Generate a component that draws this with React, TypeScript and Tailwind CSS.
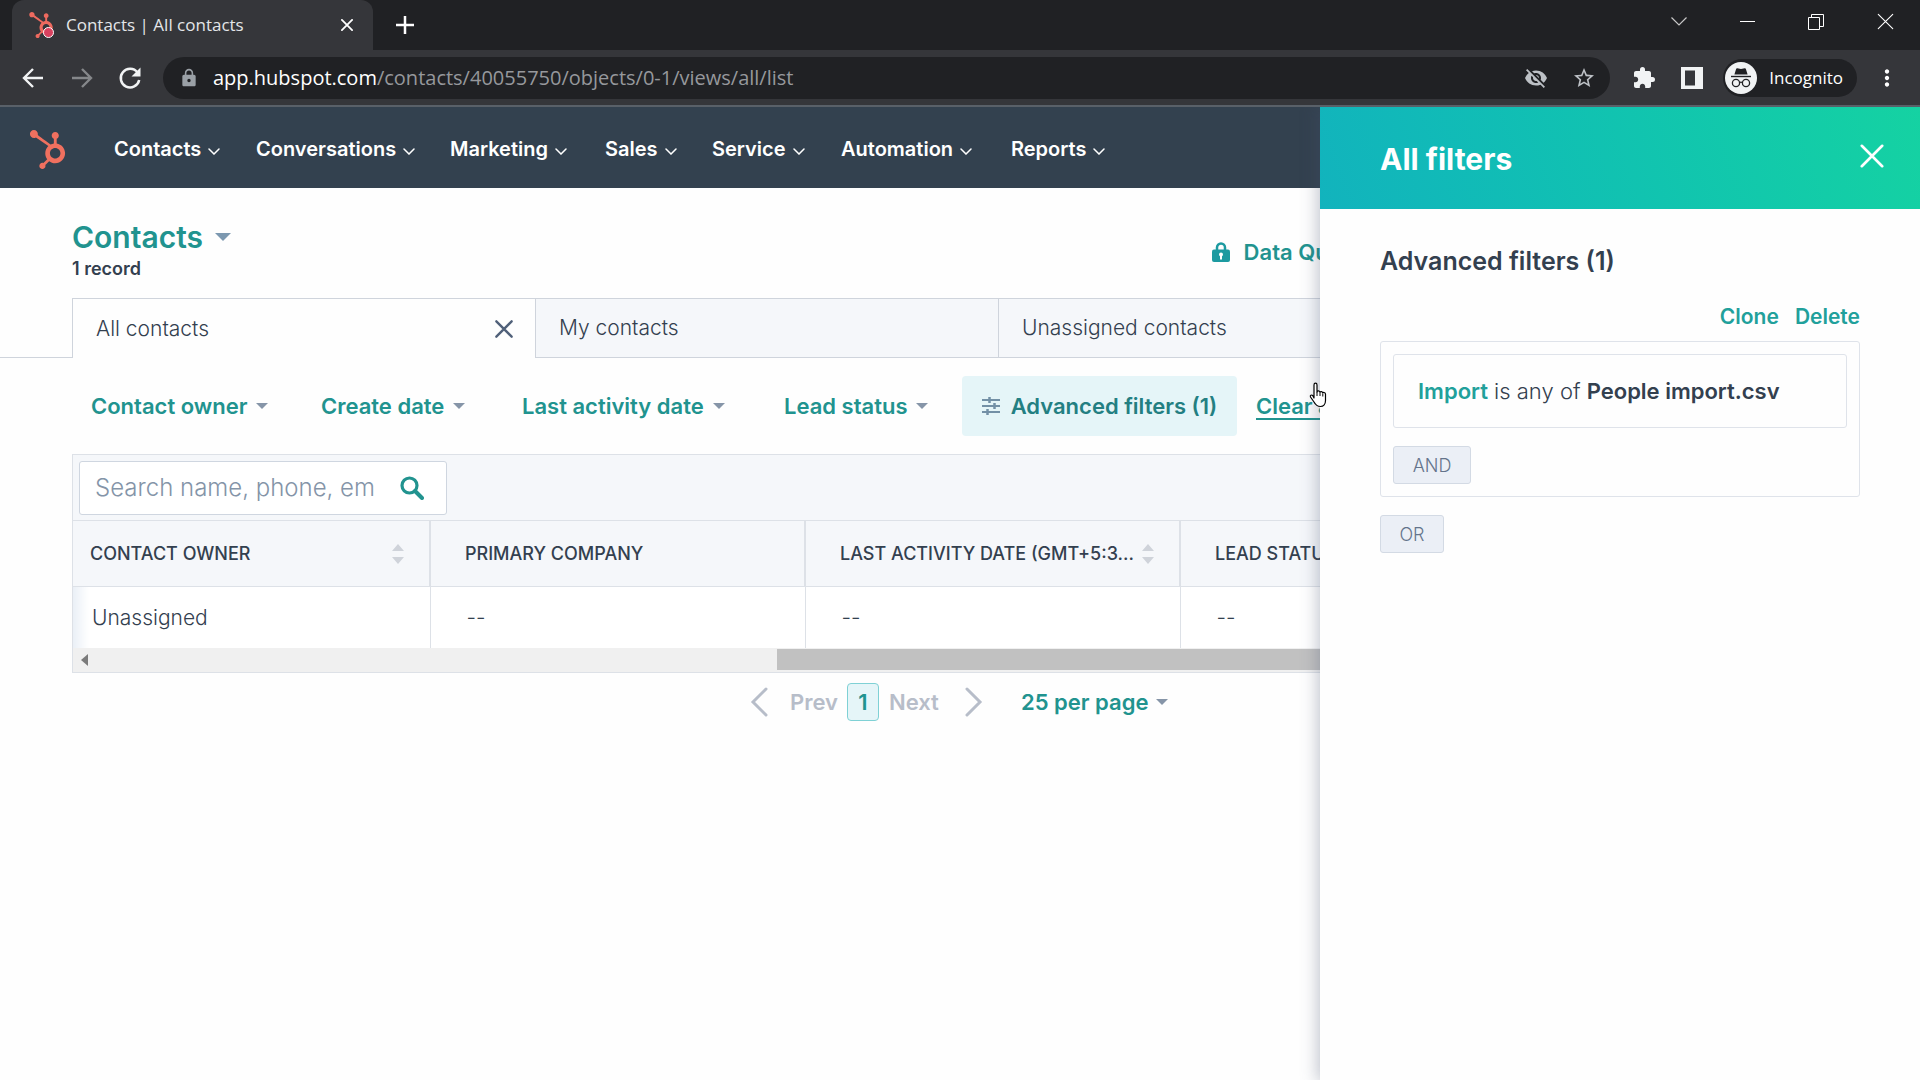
import React from "react";
import { FaHubspot } from "react-icons/fa";
import { MdExtension, MdLock, MdMoreVert, MdStarBorder, MdVisibilityOff } from "react-icons/md";

const UI_FONT = "font-[Inter,'Liberation_Sans',sans-serif]";
const CHROME_FONT = "font-['Open_Sans','Noto_Sans',sans-serif]";

function Caret({ className = "" }: { className?: string }) {
  return (
    <svg viewBox="0 0 12 6" className={`shrink-0 ${className}`} aria-hidden="true">
      <path d="M0 0h12L6 6z" fill="currentColor" />
    </svg>
  );
}

function Cross({ className = "", width = 2 }: { className?: string; width?: number }) {
  return (
    <svg viewBox="0 0 20 20" className={`shrink-0 ${className}`} aria-hidden="true">
      <path d="M1.5 1.5l17 17M18.5 1.5l-17 17" stroke="currentColor" strokeWidth={width} strokeLinecap="round" fill="none" />
    </svg>
  );
}

function SortIcon() {
  return (
    <svg viewBox="0 0 12 24" className="h-6 w-3 shrink-0 text-[#cfd3da]" aria-hidden="true">
      <path d="M6 2l6 7H0zM0 15h12l-6 7z" fill="currentColor" />
    </svg>
  );
}

function IncognitoIcon() {
  return (
    <svg viewBox="0 0 32 32" className="size-8 shrink-0" aria-hidden="true">
      <circle cx="16" cy="16" r="16" fill="#f1f3f4" />
      <path d="M12.3 6.2l3.7.9 3.7-.9c.6-.1 1 .1 1.200.7l1.700 5.600H9.400l1.700-5.600c.2-.6.6-.8 1.200-.7z" fill="#202124" />
      <path d="M6 14.500h20" stroke="#202124" strokeWidth="1.400" />
      <g fill="none" stroke="#202124" strokeWidth="1.300">
        <circle cx="11" cy="21" r="3.600" />
        <circle cx="21" cy="21" r="3.600" />
        <path d="M14.600 20.600c.9-.7 1.900-.7 2.800 0" />
      </g>
    </svg>
  );
}

function Browser() {
  return (
    <header className={`${CHROME_FONT} bg-[#35363a] text-white`}>
      <div className="flex h-[50px] items-stretch bg-[#202124] pl-3">
        <div className="flex w-[361px] items-center rounded-t-xl bg-[#35363a] pr-4 pl-4">
          <span className="relative mr-3 flex">
            <FaHubspot className="size-[26px] text-[#ee6a5f]" />
            <span className="absolute right-0 bottom-0 size-[11px] rounded-full border border-white bg-[#d9415f]" />
          </span>
          <span className="flex-1 text-[17px] whitespace-nowrap text-[#e4e6e9]">Contacts | All contacts</span>
          <button aria-label="Close tab" className="flex p-1">
            <Cross className="size-3" width={3} />
          </button>
        </div>
        <button aria-label="New tab" className="flex items-center px-[23px]">
          <svg viewBox="0 0 18 18" className="size-[18px]" aria-hidden="true">
            <path d="M9 0v18M0 9h18" stroke="currentColor" strokeWidth="2.500" />
          </svg>
        </button>
        <div className="ml-auto flex h-[43px] items-center">
          <button aria-label="Search tabs" className="flex w-[68px] justify-center">
            <svg viewBox="0 0 16 9" className="h-[9px] w-4" aria-hidden="true">
              <path d="M.5.5L8 8 15.500.5" fill="none" stroke="#c8c8c8" strokeWidth="1.200" />
            </svg>
          </button>
          <button aria-label="Minimize" className="flex w-[68px] justify-center">
            <span className="h-px w-[15px] bg-white" />
          </button>
          <button aria-label="Restore" className="flex w-[70px] justify-center">
            <svg viewBox="0 0 16 16" className="size-4" aria-hidden="true">
              <path d="M.5 3.500h11v12H.5zM3.500 3.500v-3h12v12h-4" fill="none" stroke="white" />
            </svg>
          </button>
          <button aria-label="Close window" className="flex w-[69px] justify-center">
            <Cross className="size-[17px]" width={1.3} />
          </button>
        </div>
      </div>
      <div className="flex h-[57px] items-center border-b-2 border-[#596068] pr-5 pl-[21px]">
        <button aria-label="Back" className="flex w-[49px]">
          <svg viewBox="0 0 24 24" className="size-6" aria-hidden="true">
            <path d="M22 12H3M12 3l-9 9 9 9" fill="none" stroke="#f1f3f4" strokeWidth="2.400" />
          </svg>
        </button>
        <button aria-label="Forward" className="flex w-12">
          <svg viewBox="0 0 24 24" className="size-6" aria-hidden="true">
            <path d="M2 12h19M12 3l9 9-9 9" fill="none" stroke="#85878a" strokeWidth="2.400" />
          </svg>
        </button>
        <button aria-label="Reload" className="flex w-[45px]">
          <svg viewBox="0 0 24 24" className="size-6" aria-hidden="true">
            <path d="M19.500 6.500A9.300 9.300 0 1 0 21.200 14" fill="none" stroke="#f1f3f4" strokeWidth="2.500" />
            <path d="M22.500 1.500v9h-9z" fill="#f1f3f4" />
          </svg>
        </button>
        <div className="flex h-[42px] flex-1 items-center rounded-full bg-[#202124] pr-[14px] pl-4">
          <MdLock className="mr-[14px] size-5 text-[#9aa0a6]" />
          <div role="textbox" aria-label="Address" className="flex-1 text-[20px] whitespace-nowrap text-[#96989c]">
            <span className="text-white">app.hubspot.com</span>/contacts/40055750/objects/0-1/views/all/list
          </div>
          <button aria-label="Third-party cookies blocked" className="mr-6">
            <MdVisibilityOff className="size-6 text-[#bdc1c6]" />
          </button>
          <button aria-label="Bookmark this tab">
            <MdStarBorder className="size-6 text-[#bdc1c6]" />
          </button>
        </div>
        <button aria-label="Extensions" className="ml-[22px]">
          <MdExtension className="size-6 text-[#f1f3f4]" />
        </button>
        <button aria-label="Side panel" className="mr-5 ml-[25px]">
          <svg viewBox="0 0 22 22" className="size-[22px]" aria-hidden="true">
            <path d="M0 0h22v22H0zM4 3.500v15h10v-15z" fill="#f1f3f4" fillRule="evenodd" />
          </svg>
        </button>
        <button className="flex h-[38px] items-center gap-3 rounded-full bg-[#202124] pr-[14px] pl-[2px] text-[17px]">
          <IncognitoIcon />
          Incognito
        </button>
        <button aria-label="Menu" className="ml-[17px]">
          <MdMoreVert className="size-[26px]" />
        </button>
      </div>
    </header>
  );
}

const navItems = [
  { label: "Contacts", width: "w-[142px]" },
  { label: "Conversations", width: "w-[194px]" },
  { label: "Marketing", width: "w-[155px]" },
  { label: "Sales", width: "w-[107px]" },
  { label: "Service", width: "w-[129px]" },
  { label: "Automation", width: "w-[170px]" },
  { label: "Reports", width: "w-[120px]" },
];

function TopNav() {
  return (
    <nav className="flex h-[81px] items-center bg-[#33414f] pt-[3px] pl-[28px] text-white">
      <a href="#home" aria-label="HubSpot home" className="mr-[47px]">
        <FaHubspot className="size-[39px] text-[#f0705f]" />
      </a>
      {navItems.map((item) => (
        <button key={item.label} className={`${item.width} flex shrink-0 items-center gap-[7px] text-[20px] font-semibold`}>
          {item.label}
          <svg viewBox="0 0 12 7" className="mt-1 h-[7px] w-3" aria-hidden="true">
            <path d="M1 1l5 5 5-5" fill="none" stroke="currentColor" strokeWidth="1.500" strokeLinecap="round" />
          </svg>
        </button>
      ))}
    </nav>
  );
}

function ViewTabs() {
  return (
    <div role="tablist" className="flex h-[60px]">
      <div className="w-[72px] shrink-0 border-b border-[#cfd4dc]" />
      <div className="flex w-[463px] shrink-0 items-center justify-between border-t border-l border-[#cfd4dc] pr-[22px] pl-[23px]">
        <button role="tab" aria-selected="true" className="text-[21px] font-light">
          All contacts
        </button>
        <button aria-label="Close view" className="text-[#506079]">
          <Cross className="size-[18px]" width={2.6} />
        </button>
      </div>
      <button role="tab" aria-selected="false" className="w-[463px] shrink-0 border border-r-0 border-[#cfd4dc] bg-[#f5f7fa] pl-[23px] text-left text-[21px] font-light">
        My contacts
      </button>
      <button role="tab" aria-selected="false" className="flex-1 border border-r-0 border-[#cfd4dc] bg-[#f5f7fa] pl-[23px] text-left text-[21px] font-light">
        Unassigned contacts
      </button>
    </div>
  );
}

const filters = [
  { label: "Contact owner", width: "w-[230px]" },
  { label: "Create date", width: "w-[201px]" },
  { label: "Last activity date", width: "w-[262px]" },
  { label: "Lead status", width: "w-[178px]" },
];

function FilterRow() {
  return (
    <div className="flex items-center pt-[18px] pl-[91px] text-[22px] font-semibold whitespace-nowrap text-[#21938f]">
      {filters.map((f) => (
        <button key={f.label} className={`${f.width} flex shrink-0 items-center gap-[9px]`}>
          {f.label}
          <Caret className="h-[6px] w-3 text-[#8695a8]" />
        </button>
      ))}
      <button className="flex h-[60px] w-[275px] shrink-0 items-center justify-center gap-[11px] rounded-sm bg-[#e5f5f8] text-[#237f82]">
        <svg viewBox="0 0 18 18" className="size-[18px] text-[#7390a6]" aria-hidden="true">
          <path d="M0 3h18M0 9h18M0 15h18" stroke="currentColor" strokeWidth="2" />
          <path d="M7.500 0v6M12.500 6v6M5.500 12v6" stroke="currentColor" strokeWidth="2.500" />
        </svg>
        Advanced filters (1)
      </button>
      <button className="ml-[19px] underline decoration-2 underline-offset-4">Clear all</button>
    </div>
  );
}

const columns = [
  { title: "CONTACT OWNER", value: "Unassigned", sortable: true },
  { title: "PRIMARY COMPANY", value: "--", sortable: false },
  { title: "LAST ACTIVITY DATE (GMT+5:3...", value: "--", sortable: true },
  { title: "LEAD STATUS", value: "--", sortable: true },
];

function ContactsTable() {
  return (
    <section className="mt-[18px] mr-[72px] ml-[72px] border border-[#dde1e7] bg-[#f5f7fa]">
      <div className="flex h-[65px] items-center pl-[6px]">
        <label className="flex h-[54px] w-[368px] items-center rounded-[3px] border border-[#cfd6e0] bg-white pr-[22px] pl-[15px]">
          <input
            aria-label="Search contacts"
            placeholder="Search name, phone, em"
            className="min-w-0 flex-1 text-[24px] font-light outline-none placeholder:text-[#8494a8]"
          />
          <svg viewBox="0 0 24 24" className="ml-2 size-6 shrink-0 text-[#21938f]" aria-hidden="true">
            <circle cx="9.500" cy="9.500" r="7.500" fill="none" stroke="currentColor" strokeWidth="3.200" />
            <path d="M15 15l7 7" stroke="currentColor" strokeWidth="4" strokeLinecap="round" />
          </svg>
        </label>
      </div>
      <table className="w-full table-fixed border-collapse text-left">
        <colgroup>
          <col className="w-[357px]" />
          <col className="w-[375px]" />
          <col className="w-[375px]" />
          <col />
        </colgroup>
        <thead>
          <tr className="h-[66px]">
            {columns.map((c, i) => (
              <th
                key={c.title}
                scope="col"
                className={`border-t border-b border-[#dde1e7] pr-[25px] text-[18px] font-medium whitespace-nowrap ${i === 0 ? "pl-[17px]" : "border-l-2 pl-[34px]"}`}
              >
                <div className="flex items-center justify-between">
                  {c.title}
                  {c.sortable && <SortIcon />}
                </div>
              </th>
            ))}
          </tr>
        </thead>
        <tbody>
          <tr className="h-[61px] bg-white">
            {columns.map((c, i) => (
              <td
                key={c.title}
                className={`text-[21px] font-light ${i === 0 ? "bg-linear-to-r from-[#eaeff6] to-white to-[16px] pl-[19px]" : "border-l border-[#dde1e7] pl-9"}`}
              >
                {c.value}
              </td>
            ))}
          </tr>
        </tbody>
      </table>
      <div className="flex h-6 items-center bg-[#f0f0f0] pl-2">
        <svg viewBox="0 0 7 12" className="h-3 w-[7px] text-[#7b7b7b]" aria-hidden="true">
          <path d="M7 0v12L0 6z" fill="currentColor" />
        </svg>
        <div className="mr-6 ml-[689px] h-[21px] flex-1 bg-[#c1c1c1]" />
      </div>
    </section>
  );
}

function Pagination() {
  return (
    <div className="flex items-center pt-[10px] pl-[750px] text-[22px] leading-7 font-semibold text-[#b7bdc9]">
      <button className="flex w-[97px] items-center gap-[22px]">
        <svg viewBox="0 0 18 30" className="h-[30px] w-[18px] shrink-0" aria-hidden="true">
          <path d="M16 2L3 15l13 13" fill="none" stroke="currentColor" strokeWidth="3" strokeLinecap="round" />
        </svg>
        Prev
      </button>
      <button aria-current="page" className="h-[38px] w-8 rounded-[4px] border border-[#7fd1d5] bg-[#e5f5f8] text-[#21938f]">
        1
      </button>
      <button className="ml-[10px] flex w-[123px] items-center gap-[26px]">
        Next
        <svg viewBox="0 0 18 30" className="h-[30px] w-[18px] shrink-0" aria-hidden="true">
          <path d="M2 2l13 13L2 28" fill="none" stroke="currentColor" strokeWidth="3" strokeLinecap="round" />
        </svg>
      </button>
      <button className="ml-[9px] flex items-center gap-2 whitespace-nowrap text-[#21938f]">
        25 per page
        <Caret className="h-[6px] w-3 text-[#8695a8]" />
      </button>
    </div>
  );
}

function FiltersPanel() {
  return (
    <aside
      aria-label="All filters"
      className="absolute inset-y-0 right-0 w-[600px] bg-[#fefefe] shadow-[0_0_16px_2px_rgba(70,80,110,0.35)]"
    >
      <div className="flex h-[102px] items-center justify-between bg-linear-70 from-[#12b3bd] to-[#15d2a2] pr-9 pl-[60px] text-white">
        <h2 className="pt-[2px] text-[30px] font-bold">All filters</h2>
        <button aria-label="Close panel" className="mb-1">
          <Cross className="size-6" width={2.2} />
        </button>
      </div>
      <div className="pr-[60px] pl-[60px]">
        <h3 className="pt-9 text-[25px] leading-8 font-semibold">Advanced filters (1)</h3>
        <div className="flex justify-end gap-4 pt-[26px] text-[21px] leading-7 font-semibold text-[#21a09b]">
          <button>Clone</button>
          <button>Delete</button>
        </div>
        <div className="mt-[10px] rounded-[3px] border border-[#dfe3ea] p-3 pt-3">
          <div className="flex h-[74px] items-center rounded-[3px] border border-[#dfe3ea] pl-6 text-[22px] font-light whitespace-pre">
            <button className="font-semibold text-[#21a09b]">Import</button> is any of <strong className="font-semibold">People import.csv</strong>
          </div>
          <button className="mt-[18px] block h-[38px] w-[78px] rounded-[3px] border border-[#d3dae4] bg-[#ebeff6] text-[18px] font-light text-[#64748b]">
            AND
          </button>
        </div>
        <button className="mt-[18px] block h-[38px] w-16 rounded-[3px] border border-[#d3dae4] bg-[#ebeff6] text-[18px] font-light text-[#64748b]">
          OR
        </button>
      </div>
    </aside>
  );
}

function HandCursor() {
  return (
    <svg viewBox="0 0 18 26" className="absolute top-[275px] right-[593px] h-[26px] w-[18px]" aria-hidden="true">
      <path
        d="M5 16V3c0-2.400 3-2.400 3 0v7c0-1.500 3-1.500 3 .5 0-1.300 2.800-1.200 2.800.7 0-1.200 2.700-1 2.700 1v6.300c0 3.500-2 6-5 6-4 0-5.200-2-6.500-4.500L1.500 15c-.8-1.700 1.200-2.700 2.300-1.300z"
        fill="white"
        stroke="black"
        strokeWidth="1.200"
        strokeLinejoin="round"
      />
      <path d="M8 10v4M11 11v3M13.800 12v2.500" stroke="black" strokeWidth="1" />
    </svg>
  );
}

export default function App() {
  return (
    <div className="flex min-h-screen flex-col overflow-hidden bg-[#fefefe]">
      <Browser />
      <div className={`${UI_FONT} relative flex-1 overflow-hidden text-[#33404f]`}>
        <TopNav />
        <div className="flex h-[110px] items-start justify-between pt-[29px] pr-[546px] pl-[72px]">
          <div>
            <h1>
              <button className="flex items-center gap-3 text-[30px] leading-10 font-semibold text-[#21938f]">
                Contacts
                <Caret className="h-2 w-4 text-[#7c98b0]" />
              </button>
            </h1>
            <p className="text-[18px] leading-6 font-semibold">1 record</p>
          </div>
          <button className="mt-[21px] flex items-center gap-[14px] text-[22px] leading-7 font-semibold whitespace-nowrap text-[#21938f]">
            <svg viewBox="0 0 18 20" className="h-5 w-[18px] text-[#1c9aa0]" aria-hidden="true">
              <path d="M5 9V5.500a4 4 0 0 1 8 0V9" fill="none" stroke="currentColor" strokeWidth="2.500" />
              <rect y="7.500" width="18" height="12.500" rx="2" fill="currentColor" />
              <path d="M9 14v3.500" stroke="white" strokeWidth="2" />
              <circle cx="9" cy="12.500" r="2" fill="white" />
            </svg>
            Data Quality
          </button>
        </div>
        <ViewTabs />
        <FilterRow />
        <ContactsTable />
        <Pagination />
        <FiltersPanel />
        <HandCursor />
      </div>
    </div>
  );
}
